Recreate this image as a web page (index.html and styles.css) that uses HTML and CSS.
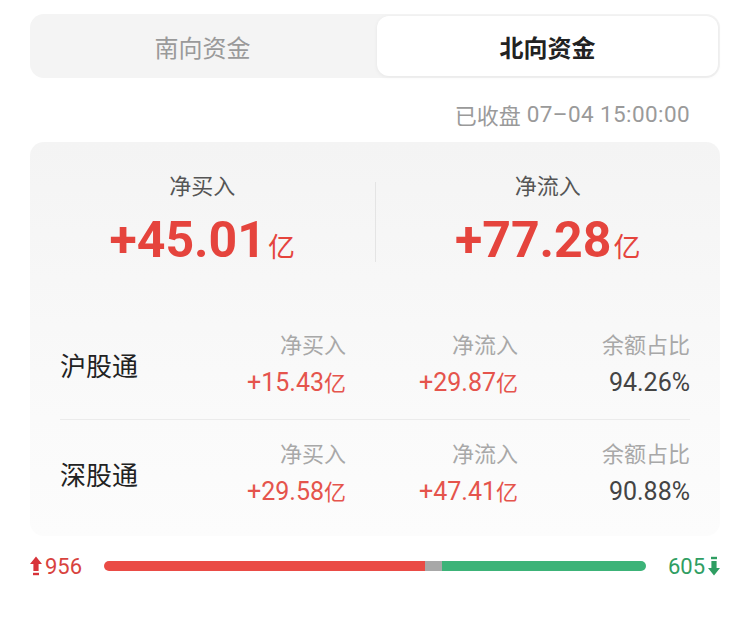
FILE: index.html
```html
<!DOCTYPE html>
<html lang="zh-CN">
<head>
<meta charset="utf-8">
<title>北向资金</title>
<link rel="stylesheet" href="styles.css">
</head>
<body>
<div class="page">
  <div class="tabs">
    <div class="tab">南向资金</div>
    <div class="tab active">北向资金</div>
  </div>
  <div class="stamp">已收盘 <span class="num">07–04 15:00:00</span></div>
  <div class="card">
    <div class="summary">
      <div class="sum-item">
        <div class="sum-label">净买入</div>
        <div class="sum-value"><span class="num">+45.01</span><span class="unit">亿</span></div>
      </div>
      <div class="vdiv"></div>
      <div class="sum-item">
        <div class="sum-label">净流入</div>
        <div class="sum-value"><span class="num">+77.28</span><span class="unit">亿</span></div>
      </div>
    </div>
    <div class="rows">
      <div class="row">
        <div class="row-title">沪股通</div>
        <div class="cell"><div class="cell-label">净买入</div><div class="cell-value red"><span class="num">+15.43</span>亿</div></div>
        <div class="cell"><div class="cell-label">净流入</div><div class="cell-value red"><span class="num">+29.87</span>亿</div></div>
        <div class="cell"><div class="cell-label">余额占比</div><div class="cell-value dark"><span class="num">94.26%</span></div></div>
      </div>
      <div class="row">
        <div class="row-title">深股通</div>
        <div class="cell"><div class="cell-label">净买入</div><div class="cell-value red"><span class="num">+29.58</span>亿</div></div>
        <div class="cell"><div class="cell-label">净流入</div><div class="cell-value red"><span class="num">+47.41</span>亿</div></div>
        <div class="cell"><div class="cell-label">余额占比</div><div class="cell-value dark"><span class="num">90.88%</span></div></div>
      </div>
    </div>
  </div>
  <div class="breadth">
    <div class="count up">
      <svg class="arrow" width="12" height="20" viewBox="0 0 12 20"><path d="M6 0.5 L12 8 H8.6 V15 H3.4 V8 H0 Z" fill="#d8333a"/><rect x="3" y="16.8" width="6" height="2.4" fill="#d8333a"/></svg>
      <span class="num">956</span>
    </div>
    <div class="bar">
      <div class="seg seg-up" style="width:59.2%"></div>
      <div class="seg seg-flat" style="width:3.2%"></div>
      <div class="seg seg-down" style="width:37.6%"></div>
    </div>
    <div class="count down">
      <span class="num">605</span>
      <svg class="arrow" width="12" height="20" viewBox="0 0 12 20"><rect x="3" y="0.8" width="6" height="2.4" fill="#2f9e62"/><path d="M6 19.5 L12 12 H8.6 V5 H3.4 V12 H0 Z" fill="#2f9e62"/></svg>
    </div>
  </div>
</div>
</body>
</html>
```

FILE: styles.css
```css
* { box-sizing: border-box; }
html, body { margin: 0; padding: 0; background: #fff; }
body {
  font-family: "Noto Sans CJK SC", "Noto Sans", sans-serif;
  color: #222;
}
.num { font-family: Roboto, "Noto Sans", sans-serif; }
.page { padding: 14px 30px 0 30px; width: 750px; }

.tabs {
  display: flex;
  height: 64px;
  background: #f4f4f4;
  border-radius: 14px;
  padding: 2px;
}
.tab {
  flex: 1;
  display: flex;
  align-items: center;
  justify-content: center;
  font-size: 24px;
  color: #9a9a9a;
  border-radius: 12px;
}
.tab.active {
  background: #fff;
  color: #222;
  font-weight: 700;
  box-shadow: 0 1px 4px rgba(0,0,0,0.06);
  margin-left: 4px;
}

.stamp {
  height: 64px;
  display: flex;
  align-items: center;
  justify-content: flex-end;
  padding: 8px 30px 0 0;
  font-size: 22px;
  color: #9a9a9a;
  gap: 6px;
}
.stamp .num { font-size: 22.5px; letter-spacing: 0.4px; }

.card {
  background: linear-gradient(#f4f4f4, #fafafa 70%, #fcfcfc);
  border-radius: 14px;
  padding: 26px 30px 8px 30px;
}
.summary {
  display: flex;
  align-items: flex-start;
  height: 140px;
}
.sum-item {
  flex: 1;
  display: flex;
  flex-direction: column;
  align-items: center;
}
.sum-item:first-child { margin-left: -30px; }
.sum-item:last-child { margin-right: -30px; }
.sum-label {
  font-size: 22px;
  color: #555;
  line-height: 32px;
}
.sum-value {
  color: #e5443d;
  line-height: 64px;
  margin-top: 8px;
  display: flex;
  align-items: baseline;
}
.sum-value .num {
  font-size: 50px;
  font-weight: 700;
}
.sum-value .unit {
  font-size: 27px;
  margin-left: 2px;
}
.vdiv {
  width: 1px;
  height: 80px;
  background: #e4e4e4;
  margin-top: 14px;
}

.row {
  display: grid;
  grid-template-columns: 1fr 172px 172px 172px;
  align-items: center;
  padding: 20px 0 19px 0;
}
.row + .row { border-top: 1px solid #ebebeb; padding-top: 17px; }
.row-title {
  font-size: 26px;
  color: #222;
}
.cell {
  text-align: right;
  display: flex;
  flex-direction: column;
  align-items: flex-end;
}
.cell-label {
  font-size: 22px;
  color: #a8a8a8;
  line-height: 30px;
}
.cell-value {
  font-size: 22px;
  line-height: 34px;
  margin-top: 6px;
}
.cell-value .num { font-size: 25px; }
.cell-value.red { color: #e5544c; }
.cell-value.dark { color: #444; }

.breadth {
  display: flex;
  align-items: center;
  height: 56px;
  margin-top: 2px;
}
.count {
  display: flex;
  align-items: center;
  gap: 3px;
  width: 74px;
}
.count.up { color: #d8433e; }
.count.down { color: #2f9e62; justify-content: flex-end; }
.count .num { font-size: 22px; }
.bar {
  flex: 1;
  display: flex;
  height: 10px;
  border-radius: 5px;
  overflow: hidden;
}
.seg { height: 100%; }
.seg-up { background: #ea4b45; }
.seg-flat { background: #a8a8a8; }
.seg-down { background: #3cb378; }
```
